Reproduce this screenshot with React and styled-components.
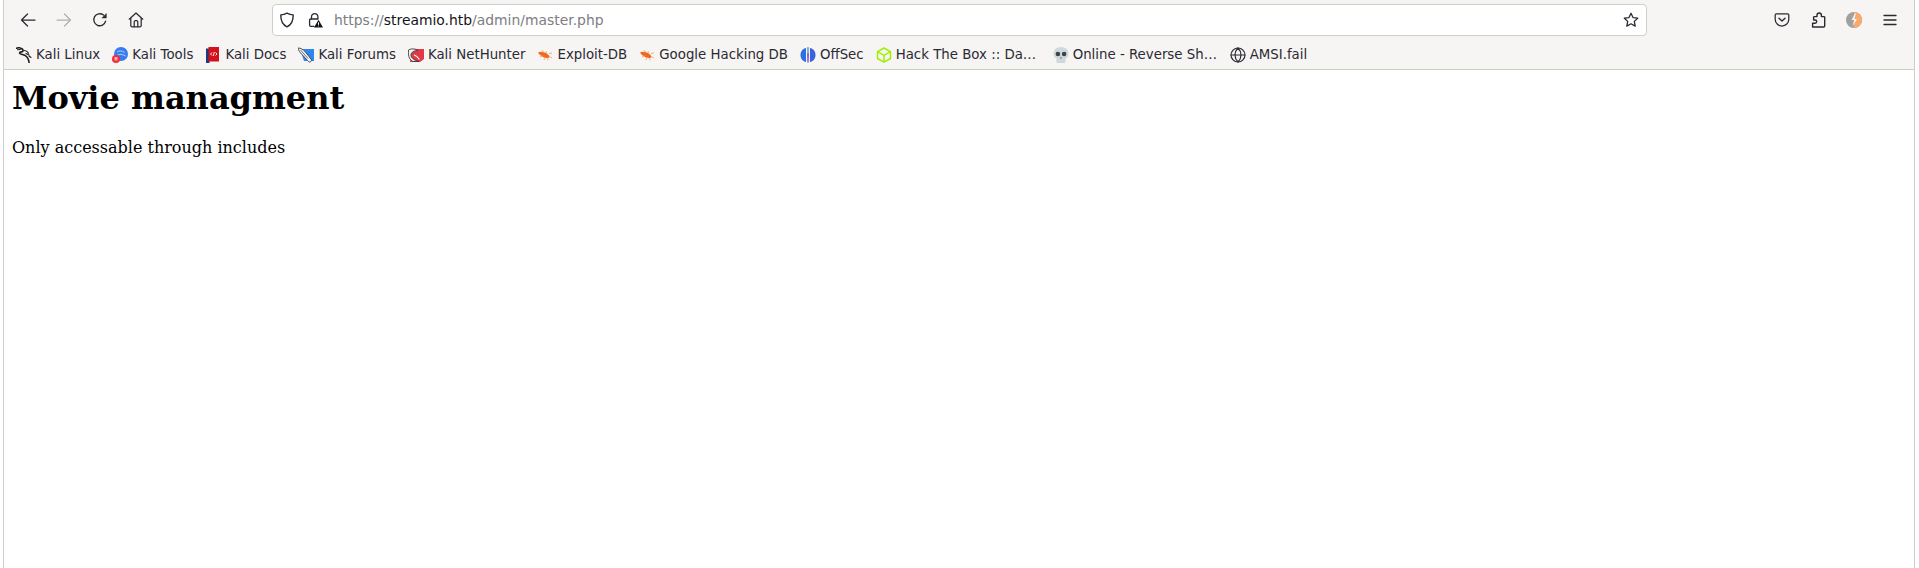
import React from "react";
import styled, { createGlobalStyle } from "styled-components";

const GlobalStyle = createGlobalStyle`
  html, body {
    margin: 0;
    padding: 0;
    height: 100%;
    background: #fff;
    overflow: hidden;
  }
  #root {
    height: 100%;
  }
`;

const Ico = ({ size = 16, children, ...rest }) => (
  <svg width={size} height={size} viewBox="0 0 16 16" fill="none" {...rest}>
    {children}
  </svg>
);

const stroke = { stroke: "#2b2a33", strokeWidth: 1.25, strokeLinecap: "round", strokeLinejoin: "round" };

const BackIcon = () => (
  <Ico>
    <path d="M15 8H1.500M7.500 2 1.500 8l6 6" {...stroke} />
  </Ico>
);
const ForwardIcon = () => (
  <Ico>
    <path d="M1 8h13.500M8.500 2l6 6-6 6" {...stroke} stroke="#b0b0b3" />
  </Ico>
);
const ReloadIcon = () => (
  <Ico>
    <path d="M13.600 9.200A6 6 0 1 1 11.500 3" {...stroke} strokeWidth="1.350" />
    <path d="M14.600 1v5.200H9.400z" fill="#2b2a33" />
  </Ico>
);
const HomeIcon = () => (
  <Ico>
    <path d="M1.200 7.200 8 1l6.800 6.200M2.800 6v7.500c0 .8.500 1.300 1.300 1.300h7.800c.8 0 1.300-.5 1.300-1.300V6" {...stroke} />
    <path d="M6.200 14.600V10c0-.8.600-1.300 1.300-1.300h1c.7 0 1.300.5 1.300 1.300v4.600" {...stroke} />
  </Ico>
);
const ShieldIcon = () => (
  <Ico>
    <path d="M8 1.200c2 1.100 4 1.600 6.200 1.700.1 5.300-1.500 9.600-6.200 11.900C3.300 12.500 1.700 8.200 1.800 2.900 4 2.800 6 2.300 8 1.200z" {...stroke} strokeWidth="1.400" />
  </Ico>
);
const LockWarnIcon = () => (
  <Ico>
    <path d="M4.500 7V4.800a3.200 3.200 0 0 1 6.400 0v1.700" {...stroke} strokeWidth="1.300" />
    <path d="M7 14.300H3.600c-.6 0-1-.4-1-1V8c0-.6.400-1 1-1h7.200" {...stroke} strokeWidth="1.300" />
    <path d="M11.500 7.800 16 15.500H7z" fill="#15141a" />
    <path d="M11.500 10.400v2.400M11.500 13.600v.7" stroke="#fff" strokeWidth="1" />
  </Ico>
);
const StarIcon = () => (
  <Ico>
    <path d="m8 1.300 2 4.300 4.700.6-3.400 3.200.9 4.700L8 11.800l-4.200 2.300.9-4.700L1.300 6.200 6 5.600z" {...stroke} strokeWidth="1.300" />
  </Ico>
);
const PocketIcon = () => (
  <Ico>
    <path d="M2.400 1.800h11.200c.7 0 1.200.5 1.200 1.200v4.300c0 3.700-3 6.700-6.800 6.700s-6.800-3-6.800-6.700V3c0-.7.500-1.200 1.200-1.200z" {...stroke} />
    <path d="M5 6.300 8 9.100l3-2.800" {...stroke} strokeWidth="1.400" />
  </Ico>
);
const PuzzleIcon = () => (
  <Ico>
    <path
      d="M2.600 15h11.200c.5 0 .9-.4.9-.9V5.500c0-.5-.4-.9-.9-.9h-2.400V3.200C11.400 2 10.500 1 9.200 1S7 2 7 3.200v1.400H4.500c-.5 0-.9.400-.9.900v2.500H5c1 0 1.700.7 1.700 1.600s-.7 1.700-1.700 1.700H2.600z"
      {...stroke}
      strokeWidth="1.400"
    />
  </Ico>
);
const AccountIcon = () => (
  <Ico>
    <circle cx="8" cy="8" r="8" fill="#a0a0a0" />
    <path d="M8 0a8 8 0 0 1 0 16z" fill="#fba86f" />
    <path d="M9 1.500 5.500 8h2.700L6.500 14.500 11 7H8.300l1.700-5.500z" fill="#f6f5f3" />
  </Ico>
);
const MenuIcon = () => (
  <Ico>
    <path d="M2 3.500h12M2 8h12M2 12.500h12" {...stroke} strokeWidth="1.300" />
  </Ico>
);

const KaliIcon = () => (
  <Ico>
    <path
      d="M.5 1.200c2.200-.8 4.200-.3 5.700.8 1.300 1 1 2.400-.1 2.700-1.100.3-2.600.1-2.600 1.300 0 1.500 3.800 1.300 5.800 2.600 2 1.300 3.300 3.300 3.800 6.900"
      stroke="#1d1d1f"
      strokeWidth="1.600"
      strokeLinecap="round"
    />
    <path d="M8.500 3.500c1.800.3 3.300 1.300 4 2.800M10 6.500l3 1.500M1.500 2.800l2.800-.3M13 9l2 1.500" stroke="#1d1d1f" strokeWidth="1.100" strokeLinecap="round" />
  </Ico>
);
const ToolsIcon = () => (
  <Ico>
    <circle cx="9" cy="7" r="7" fill="#367bf0" />
    <path d="M5 5c2-1.500 5-1.500 7.500.5M5.500 8c2-1 5-1 8 1" stroke="#b9d3fb" strokeWidth="1" />
    <circle cx="4" cy="12" r="4" fill="#ec2f3b" />
    <path d="M2.400 10.800h3.200M3.200 11v2.500M4.800 11v2.500" stroke="#fff" strokeWidth=".8" />
  </Ico>
);
const DocsIcon = () => (
  <Ico>
    <path d="M1 1.500h3.500V16H1z" fill="#233a7a" />
    <path d="M3.500 0H14v14.500H3.500z" fill="#d3121c" />
    <path d="M7 5.500 5.500 7 7 8.500M10.500 5.500 12 7l-1.500 1.500M9.300 5l-1 4" stroke="#fff" strokeWidth=".9" />
  </Ico>
);
const ForumsIcon = () => (
  <Ico>
    <path d="M2 2h14v12H6z" fill="#2f86ee" />
    <path d="M0 1c3 0 5 1.500 7 3.500l6 7.500c1 1.200.5 2.500-1 3-1 .2-1.800-.5-2.500-1.500L4 7.500C2 5.500.5 3.500 0 1z" fill="#eef2f7" stroke="#3c4046" strokeWidth=".9" />
    <path d="M2.500 3 10 11.500" stroke="#3c4046" strokeWidth=".7" />
  </Ico>
);
const HunterIcon = () => (
  <Ico>
    <path d="M4 2h12v10l-4 3H2z" fill="#df3a45" />
    <path d="M.5 3C4 1 8 2 10 3.500 6.500 3.500 3 5 3 8c0 3 3.500 5.500 8 6.500H5C2 13 0 10.500.5 3z" fill="#f4f4f4" stroke="#3a3436" strokeWidth=".9" />
    <path d="M6 8c2 .5 4 2.500 5.500 4.500" stroke="#fff" strokeWidth="1.200" />
  </Ico>
);
const BugIcon = () => (
  <Ico>
    <path d="M1 5.500C4 4 8 5 11 7.500c2 1.700 1.500 3.500-.5 3.500-3.500 0-7.500-2-9.500-5.500z" fill="#ef6a1c" />
    <path d="M5 3l2 2.500M9 4l.5 2.500M12 6.500 15 6M3 10l3-1.500M7 13l1.500-3M11 13.500l-.5-3M12 9.500l3 1.500" stroke="#f59a66" strokeWidth=".8" />
  </Ico>
);
const OffSecIcon = () => (
  <Ico>
    <path d="M6 1C2.500 1.700.5 4.500.5 8s2 6.300 5.500 7z" fill="#2f6fe0" />
    <path d="M10 1c3.500.7 5.500 3.500 5.500 7s-2 6.300-5.500 7z" fill="#3a62dc" />
    <path d="M7 .5h2l-.4 14.500L8 16l-.6-1z" fill="#6a3fd0" />
    <path d="M7.200.5h1.600v6H7.200z" fill="#7fc9ee" />
  </Ico>
);
const BoxIcon = () => (
  <Ico>
    <path d="M8 1l6.500 3.700v6.800L8 15.200l-6.500-3.700V4.700zM1.500 4.700 8 8.400l6.500-3.700M8 8.400v6.800" stroke="#9fef00" strokeWidth="1.500" strokeLinejoin="round" />
  </Ico>
);
const SkullIcon = () => (
  <Ico>
    <path d="M8 0c4.400 0 7.500 2.800 7.500 6.500 0 2.500-1 4.300-3 5.300V15c0 .6-.4 1-1 1h-7c-.6 0-1-.4-1-1v-3.200c-2-1-3-2.800-3-5.300C.5 2.800 3.600 0 8 0z" fill="#cfd8dc" />
    <circle cx="4.900" cy="7" r="2.300" fill="#3c4245" />
    <circle cx="11.100" cy="7" r="2.300" fill="#3c4245" />
    <path d="M8 9.500 7 11.500h2z" fill="#6b7478" />
  </Ico>
);
const GlobeIcon = () => (
  <Ico>
    <circle cx="8" cy="8" r="7" {...stroke} strokeWidth="1.200" />
    <path d="M1 8h14M8 1c-4 4-4 10 0 14M8 1c4 4 4 10 0 14" {...stroke} strokeWidth="1.200" />
  </Ico>
);

const bookmarks = [
  { icon: <KaliIcon />, label: "Kali Linux" },
  { icon: <ToolsIcon />, label: "Kali Tools" },
  { icon: <DocsIcon />, label: "Kali Docs" },
  { icon: <ForumsIcon />, label: "Kali Forums" },
  { icon: <HunterIcon />, label: "Kali NetHunter" },
  { icon: <BugIcon />, label: "Exploit-DB" },
  { icon: <BugIcon />, label: "Google Hacking DB" },
  { icon: <OffSecIcon />, label: "OffSec" },
  { icon: <BoxIcon />, label: "Hack The Box :: Da…", full: true },
  { icon: <SkullIcon />, label: "Online - Reverse Sh…", full: true },
  { icon: <GlobeIcon />, label: "AMSI.fail" },
];

export default function App() {
  return (
    <Frame>
      <GlobalStyle />
      <Chrome>
        <NavBar>
          <NavButtons>
            <NavButton>
              <BackIcon />
            </NavButton>
            <NavButton>
              <ForwardIcon />
            </NavButton>
            <NavButton>
              <ReloadIcon />
            </NavButton>
            <NavButton>
              <HomeIcon />
            </NavButton>
          </NavButtons>
          <UrlBar>
            <ShieldIcon />
            <LockWarnIcon />
            <UrlText>
              https://<strong>streamio.htb</strong>/admin/master.php
            </UrlText>
            <StarIcon />
          </UrlBar>
          <ToolButtons>
            <PocketIcon />
            <PuzzleIcon />
            <AccountIcon />
            <MenuIcon />
          </ToolButtons>
        </NavBar>
        <BookmarkBar>
          {bookmarks.map((b) => (
            <Bookmark key={b.label}>
              {b.icon}
              <BookmarkLabel $full={b.full}>{b.label}</BookmarkLabel>
            </Bookmark>
          ))}
        </BookmarkBar>
      </Chrome>
      <Page>
        <Title>Movie managment</Title>
        <Note>Only accessable through includes</Note>
      </Page>
    </Frame>
  );
}

const Frame = styled.div`
  height: 100%;
  margin: 0 4px 0 3px;
  border-left: 1px solid #cfcec9;
  border-right: 1px solid #cfcec9;
  display: flex;
  flex-direction: column;
`;

const Chrome = styled.div`
  background: #f6f5f3;
  border-bottom: 1px solid #cfcec9;
  font-family: "DejaVu Sans", sans-serif;
  color: #2b2a33;
`;

const NavBar = styled.div`
  height: 40px;
  display: flex;
  align-items: center;
`;

const NavButtons = styled.div`
  width: 268px;
  padding-left: 16px;
  box-sizing: border-box;
  display: flex;
  gap: 20px;
`;

const NavButton = styled.div`
  width: 16px;
  height: 16px;
  display: flex;
`;

const UrlBar = styled.div`
  width: 1375px;
  height: 32px;
  box-sizing: border-box;
  padding: 0 7px 0 6px;
  background: #fff;
  border: 1px solid #cfcec9;
  border-radius: 4px;
  display: flex;
  align-items: center;
  gap: 12px;
`;

const UrlText = styled.div`
  flex: 1;
  margin-left: -1px;
  font-size: 13.900px;
  color: #7d7d83;
  strong {
    font-weight: 400;
    color: #15141a;
  }
`;

const ToolButtons = styled.div`
  margin-left: 127px;
  display: flex;
  gap: 20px;
`;

const BookmarkBar = styled.div`
  height: 29px;
  padding-left: 12px;
  display: flex;
  align-items: center;
  gap: 12px;
`;

const Bookmark = styled.div`
  display: flex;
  align-items: center;
  gap: 4px;
`;

const BookmarkLabel = styled.span`
  font-size: 13.330px;
  white-space: nowrap;
  width: ${(p) => (p.$full ? "145px" : "auto")};
`;

const Page = styled.div`
  flex: 1;
  background: #fff;
  padding: 8px;
  font-family: "DejaVu Serif", serif;
  color: #000;
`;

const Title = styled.h1`
  margin: 0;
  padding-top: 1.500px;
  font-size: 32px;
  font-weight: 700;
  line-height: 37px;
`;

const Note = styled.p`
  margin: 21px 0 0;
  font-size: 16px;
  line-height: 19px;
`;
